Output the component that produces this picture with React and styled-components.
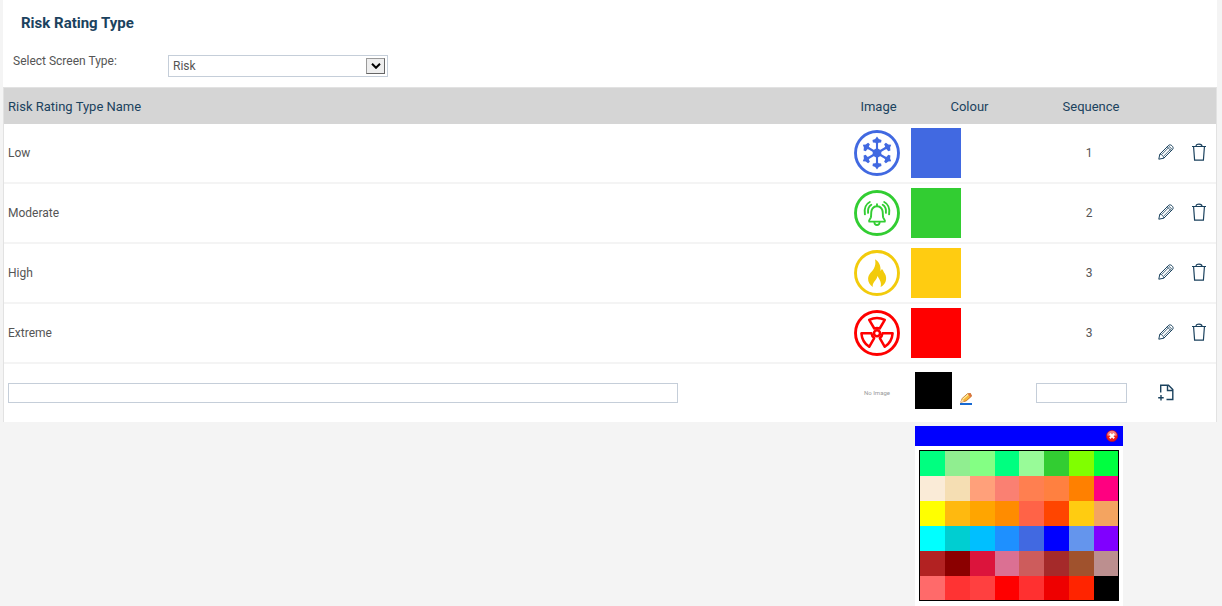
import React, { useState } from "react";
import styled, { createGlobalStyle } from "styled-components";

const ratings = [
  { name: "Low", icon: "snow", colour: "#4169e1", sequence: 1 },
  { name: "Moderate", icon: "bell", colour: "#32cd32", sequence: 2 },
  { name: "High", icon: "fire", colour: "#ffcc11", sequence: 3 },
  { name: "Extreme", icon: "hazard", colour: "#ff0000", sequence: 3 },
];

const palette = [
  "#00ff80", "#90ee90", "#84ff84", "#00ff80", "#98fb98", "#32cd32", "#80ff00", "#00ff40",
  "#faebd7", "#f5deb3", "#ffa07a", "#fa8072", "#ff7f50", "#ff8040", "#ff8000", "#ff0080",
  "#ffff00", "#ffb90f", "#ffa500", "#ff8c00", "#ff6347", "#ff4500", "#ffcc11", "#f4a460",
  "#00ffff", "#00ced1", "#00bfff", "#1e90ff", "#4169e1", "#0000ff", "#6495ed", "#8000ff",
  "#b22222", "#8b0000", "#dc143c", "#db7093", "#cd5c5c", "#a52a2a", "#a0522d", "#bc8f8f",
  "#ff6a6a", "#ff3333", "#ff4040", "#ff0000", "#ff3030", "#ee0000", "#ff2400", "#000000",
];

const glyphs = {
  snow: (
    <>
      {[0, 60, 120, 180, 240, 300].map((angle) => (
        <g key={angle} transform={`rotate(${angle} 23 23)`}>
          <path d="M23 23V9" stroke="currentColor" strokeWidth="2.1" />
          <path
            d="M23 6.600l1.800 2.300 2.700 1.200-.4 2.300-2.600.3L23 15l-1.500-2.300-2.600-.3-.4-2.300 2.700-1.200z"
            fill="currentColor"
          />
        </g>
      ))}
      <path d="M23 18l4.300 2.500v5L23 28l-4.300-2.500v-5z" fill="currentColor" />
    </>
  ),
  bell: (
    <g fill="none" stroke="currentColor" strokeWidth="1.900" strokeLinecap="round">
      <path d="M23 14.200v2M15.200 31.600c-.8-1.600 1.200-2.400 1.700-4.400.5-2.300 0-4.600.7-6.800.8-2.600 2.900-4.200 5.400-4.200s4.600 1.600 5.400 4.200c.7 2.200.2 4.500.7 6.800.5 2 2.500 2.800 1.700 4.400z" strokeLinejoin="round" />
      <path d="M20.400 32.500c.3 3.400 4.900 3.400 5.200 0" />
      <path d="M17.300 14.800c-2.800 1.800-3.600 4.500-3.200 8M15.800 12c-4.600 2.400-5.800 7-4.900 12.400" />
      <path d="M28.700 14.800c2.800 1.800 3.600 4.500 3.200 8M30.200 12c4.600 2.400 5.800 7 4.900 12.400" />
    </g>
  ),
  fire: (
    <path
      d="M18.800 37c-3-1.900-4.900-5.100-4.700-8.400.3-5 3.900-6.600 5.800-10.200 1.600-3 1.900-6 1.100-9.200 3.900 2.200 6 6.300 5.500 11.900l1.400-2c1.600 1.400 1.300 2.400 3 4.600 2.700 4.800 1 10.800-4.300 13.300 1-3.900-.2-6.600-3.300-11-.2 2.700-1.500 3.700-2.900 5.500-1.500 1.900-1.900 3.600-1.600 5.500z"
      fill="currentColor"
    />
  ),
  hazard: (
    <g fill="none" stroke="currentColor" strokeWidth="2.500" strokeLinejoin="round">
      <circle cx="23" cy="23.300" r="3" />
      {[0, 120, 240].map((angle) => (
        <path
          key={angle}
          transform={`rotate(${angle} 23 23.300)`}
          d="M20.300 18.500L15.200 9.800Q23 6 30.800 9.800L25.700 18.500Q23 17.300 20.300 18.500z"
        />
      ))}
    </g>
  ),
};

function RatingIcon({ type }) {
  return (
    <Badge $type={type} viewBox="0 0 46 46" role="img" aria-label={type}>
      <circle cx="23" cy="23" r="21.500" fill="none" stroke="currentColor" strokeWidth="2.900" />
      {glyphs[type]}
    </Badge>
  );
}

function PencilIcon() {
  return (
    <svg width="16" height="16" viewBox="0 0 16 16" fill="none" stroke="currentColor" strokeLinejoin="round">
      <path d="M.8 15.200l1-5L10.700 1.300c1.900-1.700 5.700 1.800 4 4L5.800 14.200z" />
      <path d="M1.800 10.200c1.800 0 3.800 1.800 4 4M9.200 2.800l4 4M10.500 1.800l3.800 3.700M3.700 10.500l7-7M5.500 12.300l7-7" strokeWidth=".8" />
    </svg>
  );
}

function TrashIcon() {
  return (
    <svg width="16" height="18" viewBox="0 0 16 18" fill="none" stroke="currentColor" strokeWidth="1.200">
      <path d="M1 3.500h14M5 3.300c0-3 6-3 6 0M2.600 4l1 13.200h8.800l1-13.200" />
    </svg>
  );
}

function AddPageIcon() {
  return (
    <svg width="16" height="17" viewBox="0 0 16 17" fill="none" stroke="currentColor" strokeWidth="1.400">
      <path d="M2.700 8.500V1.200H10.500l4.300 4.300v10H8.500M9.500 1.200v5.300h5.300M3 11v5.500M.2 13.700h5.500" />
    </svg>
  );
}

function ColourPencilIcon() {
  return (
    <svg width="12" height="12" viewBox="0 0 12 12">
      <path d="M0 10h12v2H0z" fill="#1769d2" />
      <path d="M.8 9.300l1.300-3.800L7.400.8 10.500.5l1 2.700-5.300 4.700z" fill="#f6b73c" stroke="#b8651b" strokeWidth=".8" />
      <path d="M2.600 6.400l5.500-4.900" stroke="#fff0a8" strokeWidth="1.200" />
      <path d="M8.200.9l2.200-.5 1.200 2.500-1.500 1.300z" fill="#e0703f" />
      <path d="M.8 9.300l1.100-3 2.200 2z" fill="#fae3bd" />
    </svg>
  );
}

function CloseIcon() {
  return (
    <svg width="12" height="12" viewBox="0 0 12 12">
      <circle cx="6" cy="6" r="5.600" fill="#ef1c1c" stroke="#b80f24" strokeWidth=".6" />
      <path d="M1.200 5.500a4.800 4.800 0 0 1 9.600 0Q6 7 1.200 5.500z" fill="#f58080" />
      <path d="M3.800 3.800l4.400 4.400M8.200 3.800L3.800 8.200" stroke="#fff" strokeWidth="2" />
    </svg>
  );
}

export default function App() {
  const [colour, setColour] = useState("#000000");
  const [open, setOpen] = useState(true);

  return (
    <Page>
      <GlobalStyle />
      <Panel>
        <Title>Risk Rating Type</Title>
        <Filter>
          <FilterLabel htmlFor="screen-type">Select Screen Type:</FilterLabel>
          <SelectBox>
            <Select id="screen-type" defaultValue="Risk">
              <option>Risk</option>
            </Select>
            <SelectArrow>
              <svg width="10" height="6" viewBox="0 0 10 6" fill="none" stroke="#000" strokeWidth="2">
                <path d="M1 .8l4 4 4-4" />
              </svg>
            </SelectArrow>
          </SelectBox>
        </Filter>
        <Table>
          <colgroup>
            <col />
            <Col $width={57} />
            <Col $width={125} />
            <Col $width={118} />
            <Col $width={66} />
          </colgroup>
          <thead>
            <tr>
              <Th $align="left">Risk Rating Type Name</Th>
              <Th>Image</Th>
              <Th>Colour</Th>
              <Th>Sequence</Th>
              <Th aria-label="Actions" />
            </tr>
          </thead>
          <tbody>
            {ratings.map((rating) => (
              <Row key={rating.name}>
                <Td>{rating.name}</Td>
                <Td>
                  <RatingIcon type={rating.icon} />
                </Td>
                <Td>
                  <Swatch $colour={rating.colour} />
                </Td>
                <SequenceTd>{rating.sequence}</SequenceTd>
                <Td>
                  <Actions>
                    <IconButton aria-label={`Edit ${rating.name}`}>
                      <PencilIcon />
                    </IconButton>
                    <IconButton aria-label={`Delete ${rating.name}`}>
                      <TrashIcon />
                    </IconButton>
                  </Actions>
                </Td>
              </Row>
            ))}
            <Row>
              <Td>
                <TextInput type="text" aria-label="Risk rating type name" $width="80%" />
              </Td>
              <Td>
                <NoImage>No Image</NoImage>
              </Td>
              <Td>
                <ColourField>
                  <Swatch $colour={colour} $small />
                  <PickButton aria-label="Pick colour" onClick={() => setOpen(!open)}>
                    <ColourPencilIcon />
                  </PickButton>
                  {open && (
                    <Picker>
                      <PickerBar>
                        <IconButton aria-label="Close" onClick={() => setOpen(false)}>
                          <CloseIcon />
                        </IconButton>
                      </PickerBar>
                      <Palette>
                        {palette.map((value, index) => (
                          <PaletteCell
                            key={index}
                            $colour={value}
                            aria-label={value}
                            onClick={() => setColour(value)}
                          />
                        ))}
                      </Palette>
                    </Picker>
                  )}
                </ColourField>
              </Td>
              <Td>
                <TextInput type="text" aria-label="Sequence" $width="91px" />
              </Td>
              <Td>
                <Actions>
                  <IconButton aria-label="Add rating type">
                    <AddPageIcon />
                  </IconButton>
                </Actions>
              </Td>
            </Row>
          </tbody>
        </Table>
      </Panel>
    </Page>
  );
}

const GlobalStyle = createGlobalStyle`
  *, *::before, *::after {
    box-sizing: border-box;
  }

  body {
    margin: 0;
    background: #f4f4f4;
    color: #555555;
    font-family: Roboto, "Liberation Sans", sans-serif;
    font-size: 12px;
    line-height: 16px;
  }

  svg {
    display: block;
  }
`;

const Page = styled.div`
  min-height: 100vh;
  padding: 0 5px 0 3px;
`;

const Panel = styled.main`
  background: white;
`;

const Title = styled.h1`
  margin: 0;
  padding: 13px 18px 0;
  color: #1b425e;
  font-size: 15px;
  line-height: 20px;
  font-weight: 700;
`;

const Filter = styled.div`
  display: flex;
  align-items: flex-start;
  padding: 22px 10px 10px;
`;

const FilterLabel = styled.label`
  width: 155px;
  line-height: 12px;
`;

const SelectBox = styled.div`
  position: relative;
  width: 220px;
  height: 22px;
`;

const Select = styled.select`
  appearance: none;
  width: 100%;
  height: 100%;
  padding: 0 24px 0 4px;
  border: 1px solid #c5ced9;
  border-radius: 0;
  background: white;
  color: inherit;
  font: inherit;
`;

const SelectArrow = styled.span`
  position: absolute;
  top: 3px;
  right: 3px;
  width: 19px;
  height: 16px;
  display: grid;
  place-items: center;
  border: 1px solid;
  border-color: #9a9a9a #666666 #666666 #9a9a9a;
  background: #eeeeee;
  pointer-events: none;
`;

const Table = styled.table`
  width: 100%;
  table-layout: fixed;
  border-collapse: separate;
  border-spacing: 0;
  border: 1px solid #e2e2e2;
  border-bottom: 0;
`;

const Col = styled.col`
  width: ${(props) => props.$width}px;
`;

const Th = styled.th`
  height: 36px;
  padding: 2px 4px 0;
  background: #d5d5d5;
  color: #1b425e;
  font-size: 13px;
  font-weight: 400;
  text-align: ${(props) => props.$align || "center"};
`;

const Td = styled.td`
  height: 60px;
  padding: 0 4px;
  border-bottom: 2px solid #f4f4f4;
`;

const SequenceTd = styled(Td)`
  padding-right: 8px;
  text-align: center;
`;

const Row = styled.tr`
  &:last-child ${Td} {
    height: 58px;
    border-bottom: 0;
  }
`;

const badgeColours = {
  snow: "#4169e1",
  bell: "#32cd32",
  fire: "#f2cb0c",
  hazard: "#ff0000",
};

const Badge = styled.svg`
  width: 46px;
  height: 46px;
  color: ${(props) => badgeColours[props.$type]};
`;

const Swatch = styled.div`
  width: ${(props) => (props.$small ? 37 : 50)}px;
  height: ${(props) => (props.$small ? 37 : 50)}px;
  background: ${(props) => props.$colour};
`;

const Actions = styled.div`
  display: flex;
  align-items: center;
  gap: 17px;
  padding: 0 0 2px 4px;
`;

const IconButton = styled.button`
  padding: 0;
  border: 0;
  background: none;
  color: #1b425e;
  cursor: pointer;
`;

const PickButton = styled(IconButton)`
  padding-bottom: 4px;
`;

const TextInput = styled.input`
  display: block;
  width: ${(props) => props.$width};
  height: 20px;
  padding: 0 4px;
  border: 1px solid #c5ced9;
  background: white;
  color: inherit;
  font: inherit;
`;

const NoImage = styled.div`
  padding-right: 3px;
  color: #999999;
  font-size: 6px;
  line-height: 8px;
  text-align: center;
`;

const ColourField = styled.div`
  position: relative;
  display: flex;
  align-items: flex-end;
  gap: 8px;
  height: 42px;
  padding: 0 4px 5px;
`;

const Picker = styled.div`
  position: absolute;
  top: 54px;
  left: 4px;
  z-index: 1;
  width: 208px;
  padding-bottom: 5px;
  background: white;
`;

const PickerBar = styled.div`
  display: flex;
  align-items: center;
  justify-content: flex-end;
  height: 20px;
  padding: 0 5px;
  background: #0000ff;
`;

const Palette = styled.div`
  display: grid;
  grid-template-columns: repeat(2, 25px 25px 25px 24px);
  grid-template-rows: repeat(5, 25px) 24px;
  margin: 4px 4px 0;
  border: 1px solid black;
`;

const PaletteCell = styled.button`
  padding: 0;
  border: 0;
  background: ${(props) => props.$colour};
  cursor: pointer;
`;
